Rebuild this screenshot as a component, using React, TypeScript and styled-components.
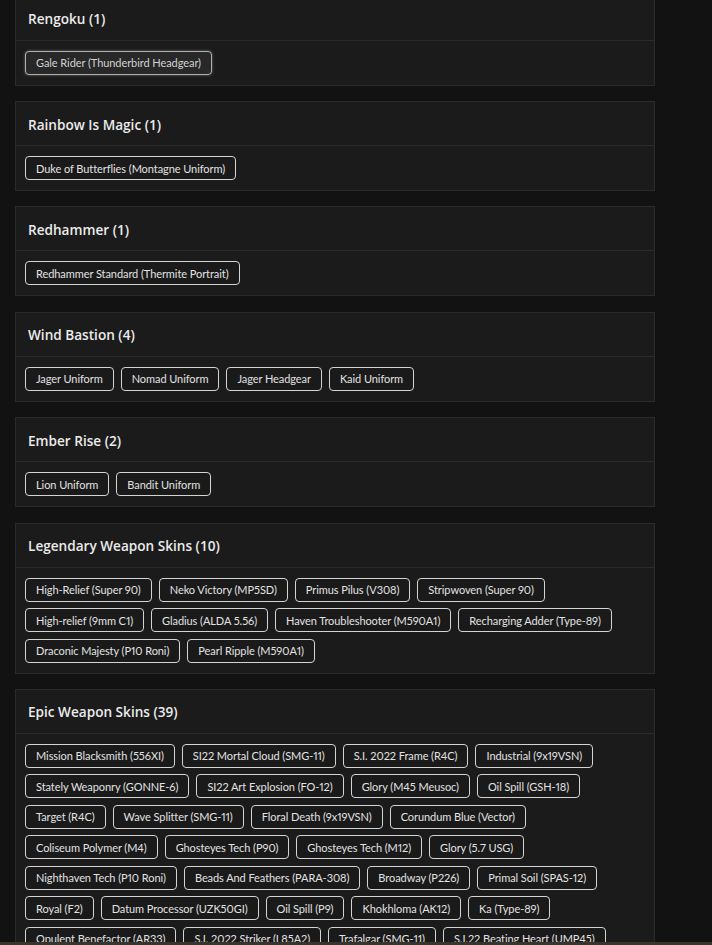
import React from "react";
import styled, { createGlobalStyle, css } from "styled-components";

const GlobalStyle = createGlobalStyle`
  html, body {
    margin: 0;
    padding: 0;
    background: #121212;
    overflow: hidden;
  }
  body {
    font-family: "Lato", "Open Sans", sans-serif;
    color: #e4e4e4;
  }
`;

type Section = { title: string; items: string[]; hovered?: number };

const sections: Section[] = [
  { title: "Rengoku (1)", items: ["Gale Rider (Thunderbird Headgear)"], hovered: 0 },
  { title: "Rainbow Is Magic (1)", items: ["Duke of Butterflies (Montagne Uniform)"] },
  { title: "Redhammer (1)", items: ["Redhammer Standard (Thermite Portrait)"] },
  { title: "Wind Bastion (4)", items: ["Jager Uniform", "Nomad Uniform", "Jager Headgear", "Kaid Uniform"] },
  { title: "Ember Rise (2)", items: ["Lion Uniform", "Bandit Uniform"] },
  {
    title: "Legendary Weapon Skins (10)",
    items: [
      "High-Relief (Super 90)",
      "Neko Victory (MP5SD)",
      "Primus Pilus (V308)",
      "Stripwoven (Super 90)",
      "High-relief (9mm C1)",
      "Gladius (ALDA 5.56)",
      "Haven Troubleshooter (M590A1)",
      "Recharging Adder (Type-89)",
      "Draconic Majesty (P10 Roni)",
      "Pearl Ripple (M590A1)",
    ],
  },
  {
    title: "Epic Weapon Skins (39)",
    items: [
      "Mission Blacksmith (556XI)",
      "SI22 Mortal Cloud (SMG-11)",
      "S.I. 2022 Frame (R4C)",
      "Industrial (9x19VSN)",
      "Stately Weaponry (GONNE-6)",
      "SI22 Art Explosion (FO-12)",
      "Glory (M45 Meusoc)",
      "Oil Spill (GSH-18)",
      "Target (R4C)",
      "Wave Splitter (SMG-11)",
      "Floral Death (9x19VSN)",
      "Corundum Blue (Vector)",
      "Coliseum Polymer (M4)",
      "Ghosteyes Tech (P90)",
      "Ghosteyes Tech (M12)",
      "Glory (5.7 USG)",
      "Nighthaven Tech (P10 Roni)",
      "Beads And Feathers (PARA-308)",
      "Broadway (P226)",
      "Primal Soil (SPAS-12)",
      "Royal (F2)",
      "Datum Processor (UZK50GI)",
      "Oil Spill (P9)",
      "Khokhloma (AK12)",
      "Ka (Type-89)",
      "Opulent Benefactor (AR33)",
      "S.I. 2022 Striker (L85A2)",
      "Trafalgar (SMG-11)",
      "S.I.22 Beating Heart (UMP45)",
    ],
  },
];

const Page = styled.main`
  display: flex;
  flex-direction: column;
  gap: 15.4px;
  width: 640px;
  margin: -4.4px 0 0 15px;
`;

const Card = styled.section`
  display: flex;
  flex-direction: column;
  background: #1b1b1b;
  border: 1px solid #2b2b2b;
`;

const CardHeader = styled.header`
  display: flex;
  align-items: center;
  height: 43px;
  padding: 0 12px;
  border-bottom: 1px solid #2b2b2b;
`;

const Title = styled.h3`
  margin: 0;
  font-family: "Open Sans", "Lato", sans-serif;
  font-size: 13.6px;
  font-weight: 600;
  color: #ebebeb;
  padding-top: 1px;
`;

const ChipList = styled.div`
  display: flex;
  flex-wrap: wrap;
  column-gap: 7px;
  row-gap: 6.5px;
  padding: 10px 9px;
`;

const Chip = styled.span<{ $hovered?: boolean }>`
  display: inline-flex;
  align-items: center;
  height: 24px;
  box-sizing: border-box;
  padding: 0 10px;
  border: 1px solid #d4d4d4;
  border-radius: 4px;
  background: #1a1a1a;
  color: #e2e2e2;
  font-size: 11px;
  font-variant-numeric: proportional-nums;
  letter-spacing: -0.07px;
  white-space: nowrap;
  ${(p) =>
    p.$hovered &&
    css`
      background: #282828;
      border-color: #b0b0b0;
      color: #d2d2d2;
      box-shadow: 0 0 3px rgba(255, 255, 255, 0.35);
    `}
`;

const BottomEdge = styled.div`
  position: fixed;
  left: 0;
  right: 0;
  bottom: 0;
  height: 3px;
  background: #3a342e;
`;

export default function App() {
  return (
    <>
      <GlobalStyle />
      <Page>
        {sections.map((s) => (
          <Card key={s.title}>
            <CardHeader>
              <Title>{s.title}</Title>
            </CardHeader>
            <ChipList>
              {s.items.map((item, i) => (
                <Chip key={item + i} $hovered={s.hovered === i}>
                  {item}
                </Chip>
              ))}
            </ChipList>
          </Card>
        ))}
      </Page>
      <BottomEdge />
    </>
  );
}
